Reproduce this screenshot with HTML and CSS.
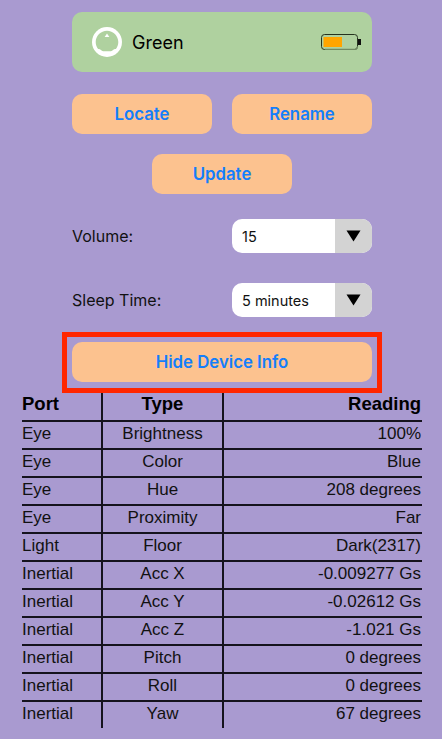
FILE: index.html
```html
<!DOCTYPE html>
<html lang="en">
<head>
<meta charset="utf-8">
<title>Device</title>
<link rel="stylesheet" href="styles.css">
</head>
<body>
<main class="page">
  <section class="device">
    <svg class="robot" width="30" height="30" viewBox="0 0 30 30" aria-hidden="true">
      <circle cx="15" cy="15" r="15" fill="#fff"/>
      <path d="M15 3.700C8.800 3.700 3.700 8.800 3.700 15c0 2.700.9 5.100 2.400 7.100 1.200-.2 2.100.1 2.800.8.900.9 2 1.300 3.500 1.300h5.200c1.500 0 2.600-.4 3.500-1.300.7-.7 1.600-1 2.800-.8 1.500-2 2.400-4.400 2.400-7.100C26.300 8.800 21.200 3.700 15 3.700Z" fill="#afd19f"/>
      <path d="M15 6.500l2.400 3.500h-4.800Z" fill="#fff"/>
    </svg>
    <span class="device-name">Green</span>
    <svg class="battery" width="40" height="16" viewBox="0 0 40 16" aria-hidden="true">
      <rect x="0.500" y="0.500" width="36" height="15" rx="3" fill="none" stroke="#26331f"/>
      <path d="M4 15.500h29.500a3 3 0 0 0 3-3" fill="none" stroke="#6f8a62" stroke-width="1.400"/>
      <rect x="2.500" y="3" width="18.500" height="10" fill="#ffa500"/>
      <rect x="37" y="5" width="3" height="6" fill="#111"/>
    </svg>
  </section>

  <div class="btn-row">
    <button class="btn">Locate</button>
    <button class="btn">Rename</button>
  </div>
  <div class="btn-center">
    <button class="btn">Update</button>
  </div>

  <div class="field field-volume">
    <span class="field-label">Volume:</span>
    <div class="select">
      <span class="select-value">15</span>
      <span class="select-arrow"><svg width="15" height="12" viewBox="0 0 15 12" aria-hidden="true"><path d="M0.500 0.500h14L7.500 11.500Z" fill="#000"/></svg></span>
    </div>
  </div>
  <div class="field field-sleep">
    <span class="field-label">Sleep Time:</span>
    <div class="select">
      <span class="select-value">5 minutes</span>
      <span class="select-arrow"><svg width="15" height="12" viewBox="0 0 15 12" aria-hidden="true"><path d="M0.500 0.500h14L7.500 11.500Z" fill="#000"/></svg></span>
    </div>
  </div>

  <div class="highlight">
    <button class="btn btn-wide">Hide Device Info</button>
  </div>

  <table class="readings">
    <colgroup><col class="c1"><col class="c2"><col class="c3"></colgroup>
    <thead>
      <tr><th class="left">Port</th><th class="mid">Type</th><th class="right">Reading</th></tr>
    </thead>
    <tbody>
      <tr><td class="left">Eye</td><td class="mid">Brightness</td><td class="right">100%</td></tr>
      <tr><td class="left">Eye</td><td class="mid">Color</td><td class="right">Blue</td></tr>
      <tr><td class="left">Eye</td><td class="mid">Hue</td><td class="right">208 degrees</td></tr>
      <tr><td class="left">Eye</td><td class="mid">Proximity</td><td class="right">Far</td></tr>
      <tr><td class="left">Light</td><td class="mid">Floor</td><td class="right">Dark(2317)</td></tr>
      <tr><td class="left">Inertial</td><td class="mid">Acc X</td><td class="right">-0.009277 Gs</td></tr>
      <tr><td class="left">Inertial</td><td class="mid">Acc Y</td><td class="right">-0.02612 Gs</td></tr>
      <tr><td class="left">Inertial</td><td class="mid">Acc Z</td><td class="right">-1.021 Gs</td></tr>
      <tr><td class="left">Inertial</td><td class="mid">Pitch</td><td class="right">0 degrees</td></tr>
      <tr><td class="left">Inertial</td><td class="mid">Roll</td><td class="right">0 degrees</td></tr>
      <tr><td class="left">Inertial</td><td class="mid">Yaw</td><td class="right">67 degrees</td></tr>
    </tbody>
  </table>
</main>
</body>
</html>
```
FILE: styles.css
```css
* { box-sizing: border-box; }
html, body { margin: 0; height: 100%; }
body {
  background: #a99ad0;
  color: #000;
  font-family: "Inter", "Liberation Sans", sans-serif;
  overflow: hidden;
}
.page {
  width: 442px;
  padding: 12px 0 0 2px;
  display: flex;
  flex-direction: column;
  align-items: center;
}
.device {
  width: 300px;
  height: 60px;
  background: #afd19f;
  border-radius: 10px;
  display: flex;
  align-items: center;
  padding: 0 11px 0 20px;
}
.robot { flex: none; }
.device-name { margin-left: 10px; font-size: 18px; flex: 1; }
.battery { flex: none; }
.btn {
  display: block;
  width: 140px;
  height: 40px;
  border: 0;
  border-radius: 10px;
  background: #fcc28f;
  color: #147efb;
  font: 600 16.800px "Inter", "Liberation Sans", sans-serif;
  padding: 0;
}
.btn-row {
  width: 300px;
  margin-top: 22px;
  display: flex;
  justify-content: space-between;
}
.btn-center { margin-top: 20px; }
.field {
  width: 300px;
  height: 34px;
  display: flex;
  align-items: center;
  justify-content: space-between;
}
.field-volume { margin-top: 25px; }
.field-sleep { margin-top: 30px; }
.field-label { font-size: 16px; color: #111; }
.select {
  width: 140px;
  height: 34px;
  background: #fff;
  border-radius: 10px;
  overflow: hidden;
  display: flex;
  align-items: center;
}
.select-value { flex: 1; padding-left: 10px; font-size: 14.500px; color: #111; }
.select-arrow {
  width: 37px;
  height: 100%;
  background: #d3d3d3;
  display: flex;
  align-items: center;
  justify-content: center;
}
.highlight {
  width: 320px;
  height: 61px;
  margin-top: 15px;
  border: 5px solid #ff2600;
  padding-left: 5px;
  padding-top: 5px;
}
.btn-wide { width: 300px; }
.readings {
  width: 400px;
  table-layout: fixed;
  border-collapse: separate;
  border-spacing: 0;
  font-family: "Liberation Sans", Arial, sans-serif;
  font-size: 17px;
  color: #111;
}
.c1 { width: 79px; }
.c2 { width: 123px; }
.readings th {
  height: 27px;
  font-size: 18.500px;
  font-weight: 700;
  padding: 0 1px 5px 0;
  color: #000;
}
.readings td {
  height: 28px;
  padding: 0 1px 2px 0;
  border-top: 2px solid #15131d;
}
.left { text-align: left; }
.readings .mid {
  text-align: center;
  border-left: 2px solid #15131d;
  border-right: 2px solid #15131d;
  padding-right: 0;
}
.right { text-align: right; }
```
